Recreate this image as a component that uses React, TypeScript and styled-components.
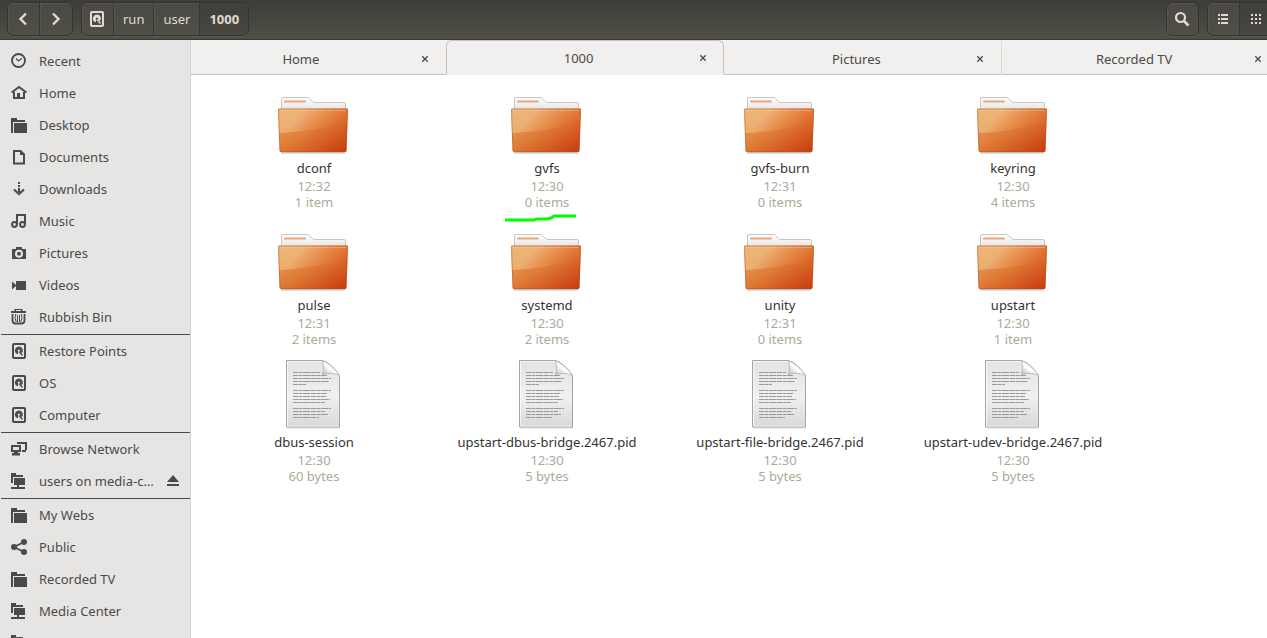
import React from "react";
import styled, { createGlobalStyle, css } from "styled-components";

const GlobalStyle = createGlobalStyle`
  * { box-sizing: border-box; }
  body { margin: 0; overflow: hidden; background: #fff; }
  body, button { font-family: "Noto Sans", "Open Sans", sans-serif; font-size: 13px; }
  button { margin: 0; padding: 0; border: 0; background: none; color: inherit; }
  svg { display: block; flex: none; }
`;

const Window = styled.div`
  display: flex;
  flex-direction: column;
  height: 100vh;
  overflow: hidden;
`;

const Toolbar = styled.header`
  flex: none;
  display: flex;
  align-items: flex-start;
  gap: 8px;
  height: 40px;
  padding: 2px 0 0 7px;
  overflow: hidden;
  background: linear-gradient(#3d3c38, #504f47);
  border-bottom: 1px solid #3a3934;
  color: #dfdbd2;
`;

const ButtonGroup = styled.div<{ $end?: boolean; $clipped?: boolean }>`
  display: flex;
  height: 34px;
  flex: none;
  border: 1px solid #34332f;
  border-radius: 6px;
  overflow: hidden;
  background: linear-gradient(#4a4943, #4f4e47);
  box-shadow: 0 1px #5a5951;
  ${(p) => p.$end && css`margin-left: auto;`}
  ${(p) => p.$clipped && css`margin-right: -6px;`}
`;

const ToolButton = styled.button<{ $active?: boolean }>`
  display: flex;
  align-items: center;
  justify-content: center;
  padding: 0 8px;
  box-shadow: inset 1px 1px #56554f;
  &:first-child { padding-left: 7px; }
  & + & { border-left: 1px solid #383733; }
  ${(p) =>
    p.$active &&
    css`
      background: linear-gradient(#403f3b, #484742);
      box-shadow: none;
    `}
`;

const PathButton = styled(ToolButton)`
  padding: 0 9px;
  border-left: 1px solid #383733;
  font-weight: ${(p) => (p.$active ? 700 : 400)};
`;

const Body = styled.div`
  flex: 1;
  display: flex;
  min-height: 0;
`;

const Sidebar = styled.nav`
  flex: none;
  width: 191px;
  padding-top: 5px;
  overflow: hidden;
  background: #e6e5e3;
  border-right: 1px solid #d6d4d1;
`;

const PlaceGroup = styled.ul`
  list-style: none;
  margin: 0;
  padding: 0;
  & + & {
    margin: 1px 0 0 1px;
    padding: 0;
    border-top: 1px solid #4a4a4a;
  }
  & + & li { margin-left: -1px; }
`;

const Place = styled.li`
  display: flex;
  align-items: center;
  height: 32px;
  padding: 0 9px 0 11px;
  color: #4a4a4a;
`;

const PlaceLink = styled.a`
  flex: 1;
  display: flex;
  align-items: center;
  gap: 12px;
  color: inherit;
  text-decoration: none;
  white-space: nowrap;
`;

const Main = styled.main`
  flex: 1;
  min-width: 0;
  display: flex;
  flex-direction: column;
`;

const TabClip = styled.div`
  flex: none;
  overflow: hidden;
  background: #f1f0ee;
`;

const TabBar = styled.div`
  display: flex;
  height: 35px;
  margin: 0 -12px 0 -23px;
`;

const Tab = styled.div<{ $active?: boolean }>`
  flex: 1;
  display: flex;
  align-items: center;
  padding: 2px 14px 0 0;
  color: #4a4a4a;
  border: 1px solid transparent;
  border-bottom-color: #c5c0b9;
  & + & { border-left-color: #dedbd7; }
  ${(p) =>
    p.$active &&
    css`
      && {
        padding-bottom: 1px;
        border-color: #c5c0b9;
        border-bottom-color: transparent;
      }
      border-radius: 6px 6px 0 0;
      && + div { border-left-color: transparent; }
    `}
`;

const TabTitle = styled.button`
  flex: 1;
  padding-left: 14px;
`;

const TabClose = styled.button`
  display: flex;
  align-items: center;
  justify-content: center;
  width: 12px;
  height: 16px;
`;

const Files = styled.div`
  flex: 1;
  display: grid;
  grid-template-columns: repeat(auto-fill, 232px);
  align-content: start;
  column-gap: 1px;
  row-gap: 10px;
  padding: 8px 6px;
  background: #fff;
`;

const FileCell = styled.figure`
  position: relative;
  display: flex;
  flex-direction: column;
  align-items: center;
  margin: 0;
`;

const Thumb = styled.div`
  display: flex;
  align-items: flex-end;
  height: 72px;
`;

const Caption = styled.figcaption`
  display: flex;
  flex-direction: column;
  align-items: center;
  padding: 4px 0 0 2px;
  line-height: 16px;
  color: #b0a899;
`;

const FileName = styled.span`
  margin-bottom: 1px;
  line-height: 18px;
  color: #333;
`;

const Underline = styled.svg`
  position: absolute;
  left: 75px;
  top: 130px;
`;

type IconName =
  | "recent" | "home" | "folder" | "document" | "download" | "music" | "camera"
  | "video" | "trash" | "disk" | "network" | "remote" | "share";

const shapes: Record<IconName, React.ReactNode> = {
  recent: (
    <g fill="none" stroke="currentColor">
      <circle cx="7.5" cy="7.5" r="6.5" strokeWidth="1.9" />
      <path d="M5 5.5 7.5 8 10.8 5.2" strokeWidth="1.2" />
    </g>
  ),
  home: (
    <>
      <path d="M.5 7.500 8 2l7.500 5.500" fill="none" stroke="currentColor" strokeWidth="2" />
      <path d="M2 7h2v5h2V8h3v4h3V7h2v7H2z" />
    </>
  ),
  folder: (
    <>
      <path d="M0 1h6v2h8v2H2v11H0z" />
      <path d="M3 6h13v10H3z" />
    </>
  ),
  document: (
    <path fillRule="evenodd" d="M2 1h8l4 4v10.500H2zM4 3v10.500h8V6H9V3z" />
  ),
  download: (
    <>
      <path d="M7 1h2v2H7zM7 4h2v2H7zM7 7h2v4H7z" />
      <path d="m3 8.500 5 4.500 5-4.500" fill="none" stroke="currentColor" strokeWidth="2.200" />
    </>
  ),
  music: (
    <g fill="none" stroke="currentColor" strokeWidth="2">
      <path d="M6 11V2h8v9" />
      <circle cx="3.500" cy="11.500" r="2.400" />
      <circle cx="11.500" cy="11.500" r="2.400" />
    </g>
  ),
  camera: (
    <path fillRule="evenodd" d="M5 2h6v2h4v10H1V4h4zM8 4.800a4 4 0 1 0 0 8 4 4 0 0 0 0-8zm0 2a2 2 0 1 1 0 4 2 2 0 0 1 0-4z" />
  ),
  video: <path d="M1 4.500 5 8V4h10v9H5V9l-4 3.500z" />,
  trash: (
    <>
      <path d="M3.500 0h8v2H15v2H0V2h3.500zM5 1v1h5V1z" fillRule="evenodd" />
      <path d="M1.500 5v6.500q0 3 3 3h6q3 0 3-3V5" fill="none" stroke="currentColor" strokeWidth="1.800" />
      <path d="M4.800 5q-1.800 3.500.4 8M6.500 6v7M8.500 6v7M10.200 5q1.800 3.500-.4 8" fill="none" stroke="currentColor" strokeWidth="1" />
    </>
  ),
  disk: (
    <>
      <rect x="2" y="1" width="12" height="14" rx="1" fill="none" stroke="currentColor" strokeWidth="2" />
      <path d="M8 3.500a4 4 0 0 0-2.500 7.200L7 11V8.500a1.200 1.200 0 1 1 2 0l2 1.500A4 4 0 0 0 8 3.500z" />
      <path d="m8 8.500 3.500 4" stroke="currentColor" strokeWidth="1.500" />
    </>
  ),
  network: (
    <>
      <path fillRule="evenodd" d="M0 4h10v7H0zM2 6v3h6V6z" />
      <path d="M3 11h4v1h2v2.500H1V12h2z" />
      <path d="M6 3V1h10v8h-1v2h-4V9h3V3z" />
    </>
  ),
  remote: (
    <>
      <path d="M0 0h5v2h7v2H2v6H0z" />
      <path d="M3 5h11v7H8v2h6v2H0v-2h6v-2H3z" />
    </>
  ),
  share: (
    <>
      <path d="M13 3 3 8l10 5" fill="none" stroke="currentColor" strokeWidth="1.800" />
      <circle cx="13" cy="3" r="3" />
      <circle cx="3" cy="8" r="3" />
      <circle cx="13" cy="13" r="3" />
    </>
  ),
};

const Icon = ({ name }: { name: IconName }) => (
  <svg width="16" height="16" viewBox="0 0 16 16" fill="currentColor" aria-hidden="true">
    {shapes[name]}
  </svg>
);

const Chevron = ({ flip }: { flip?: boolean }) => (
  <svg width="16" height="16" viewBox="0 0 16 16" fill="none" stroke="currentColor" strokeWidth="2.400">
    <path d={flip ? "m5 2.500 5.500 5.500L5 13.500" : "M11 2.500 5.500 8l5.500 5.500"} />
  </svg>
);

const FolderGradients = () => (
  <defs>
    <linearGradient id="folderFront" x1="0" y1="0" x2="1" y2="1">
      <stop offset="0" stopColor="#e8ab6c" />
      <stop offset=".5" stopColor="#de7a35" />
      <stop offset="1" stopColor="#c8380d" />
    </linearGradient>
    <linearGradient id="folderGlow" x1="0" y1="0" x2="1" y2=".3">
      <stop offset="0" stopColor="#f6cf97" stopOpacity=".35" />
      <stop offset=".35" stopColor="#f6cf97" stopOpacity=".5" />
      <stop offset="1" stopColor="#ea6a2c" stopOpacity=".25" />
    </linearGradient>
    <linearGradient id="folderBack" x1="0" y1="0" x2="0" y2="1">
      <stop offset="0" stopColor="#fff" />
      <stop offset="1" stopColor="#dedede" />
    </linearGradient>
  </defs>
);

const FolderArt = () => (
  <svg width="72" height="60" viewBox="0 0 72 60" aria-hidden="true">
    <FolderGradients />
    <path d="M4 57.500h64" stroke="#000" strokeOpacity=".25" strokeWidth="2" />
    <path d="M4.500 18V4q0-1.500 1.500-1.500h24q1.500 0 2.500 1l3 3q1 1 2.500 1h29q1.500 0 1.500 1.500v9z" fill="url(#folderBack)" stroke="#c6c6c6" />
    <path d="M8 6.500h20" stroke="#eda477" strokeWidth="2" strokeLinecap="round" />
    <path d="M2 13.500h68q1 0 1 1l-1.500 41q0 1.500-1.500 1.500H4q-1.500 0-1.500-1.500l-1.500-41q0-1 1-1z" fill="url(#folderFront)" />
    <path d="M2 13.500h68q1 0 1 1l-.6 12Q34 37 2.200 38l-1.200-23.500q0-1 1-1z" fill="url(#folderGlow)" />
    <path d="M2 14h68q.5 0 .5 1L69 55q0 1.500-1.500 1.500h-63Q3 56.500 3 55L1.500 15q0-1 .5-1z" fill="none" stroke="#b54c1c" strokeOpacity=".4" />
    <path d="M3 15.500h66" stroke="#f3c499" strokeOpacity=".5" />
  </svg>
);

const textLines = [
  "M8 13.500h27M8 16.500h34M8 19.500h38M8 22.500h36M8 25.500h13",
  "M8 31.500h38M8 34.500h34M8 37.500h33M8 40.500h37M8 43.500h32",
  "M8 49.500h38M8 52.500h32M8 55.500h35M8 58.500h26",
];

const PageArt = () => (
  <svg width="56" height="70" viewBox="0 0 56 70" aria-hidden="true">
    <defs>
      <linearGradient id="paper" x1="0" y1="0" x2="0" y2="1">
        <stop offset="0" stopColor="#e3e3e3" />
        <stop offset=".55" stopColor="#f0f0f0" />
        <stop offset="1" stopColor="#d8d8d8" />
      </linearGradient>
      <linearGradient id="curl" x1="0" y1="1" x2="1" y2="0">
        <stop offset="0" stopColor="#b0b0b0" />
        <stop offset=".45" stopColor="#fff" />
        <stop offset="1" stopColor="#c8c8c8" />
      </linearGradient>
    </defs>
    <path d="M2 69h53" stroke="#000" strokeOpacity=".14" />
    <path d="M1.500 1.500h36q8 2 17 15v51.500h-53z" fill="url(#paper)" stroke="#a4a4a4" />
    <path d="M2.500 2.500h35M2.500 2.500v64.500h51" fill="none" stroke="#fff" strokeOpacity=".7" />
    <path d="M37 1.500q3 5 .5 14 9-3 17 1Q47 5 37 1.500z" fill="url(#curl)" stroke="#b0b0b0" strokeWidth=".8" />
    {textLines.map((d) => (
      <g key={d}>
        <path d={d} stroke="#c4c4c4" />
        <path d={d} stroke="#9a9a9a" strokeDasharray="5 1 3 1 7 1" />
      </g>
    ))}
  </svg>
);

const groups: { icon: IconName; label: string; eject?: boolean }[][] = [
  [
    { icon: "recent", label: "Recent" },
    { icon: "home", label: "Home" },
    { icon: "folder", label: "Desktop" },
    { icon: "document", label: "Documents" },
    { icon: "download", label: "Downloads" },
    { icon: "music", label: "Music" },
    { icon: "camera", label: "Pictures" },
    { icon: "video", label: "Videos" },
    { icon: "trash", label: "Rubbish Bin" },
  ],
  [
    { icon: "disk", label: "Restore Points" },
    { icon: "disk", label: "OS" },
    { icon: "disk", label: "Computer" },
  ],
  [
    { icon: "network", label: "Browse Network" },
    { icon: "remote", label: "users on media-c…", eject: true },
  ],
  [
    { icon: "folder", label: "My Webs" },
    { icon: "share", label: "Public" },
    { icon: "folder", label: "Recorded TV" },
    { icon: "remote", label: "Media Center" },
    { icon: "remote", label: "" },
  ],
];

const tabs = ["Home", "1000", "Pictures", "Recorded TV"];

const files = [
  { name: "dconf", time: "12:32", size: "1 item" },
  { name: "gvfs", time: "12:30", size: "0 items", marked: true },
  { name: "gvfs-burn", time: "12:31", size: "0 items" },
  { name: "keyring", time: "12:30", size: "4 items" },
  { name: "pulse", time: "12:31", size: "2 items" },
  { name: "systemd", time: "12:30", size: "2 items" },
  { name: "unity", time: "12:31", size: "0 items" },
  { name: "upstart", time: "12:30", size: "1 item" },
  { name: "dbus-session", time: "12:30", size: "60 bytes", page: true },
  { name: "upstart-dbus-bridge.2467.pid", time: "12:30", size: "5 bytes", page: true },
  { name: "upstart-file-bridge.2467.pid", time: "12:30", size: "5 bytes", page: true },
  { name: "upstart-udev-bridge.2467.pid", time: "12:30", size: "5 bytes", page: true },
];

export default function App() {
  return (
    <Window>
      <GlobalStyle />
      <Toolbar>
        <ButtonGroup>
          <ToolButton aria-label="Back"><Chevron /></ToolButton>
          <ToolButton aria-label="Forward"><Chevron flip /></ToolButton>
        </ButtonGroup>
        <ButtonGroup>
          <ToolButton aria-label="File system"><Icon name="disk" /></ToolButton>
          <PathButton>run</PathButton>
          <PathButton>user</PathButton>
          <PathButton $active>1000</PathButton>
        </ButtonGroup>
        <ButtonGroup $end>
          <ToolButton aria-label="Search">
            <svg width="16" height="16" viewBox="0 0 16 16" fill="none" stroke="currentColor">
              <circle cx="6.500" cy="6.500" r="4.500" strokeWidth="2.200" />
              <path d="m10 10 4.500 4.500" strokeWidth="2.600" />
            </svg>
          </ToolButton>
        </ButtonGroup>
        <ButtonGroup $clipped>
          <ToolButton aria-label="List view">
            <svg width="16" height="16" viewBox="0 0 16 16" fill="currentColor">
              <path d="M3 3h2v2H3zM6 3h7v2H6zM3 7h2v2H3zM6 7h7v2H6zM3 11h2v2H3zM6 11h7v2H6z" />
            </svg>
          </ToolButton>
          <ToolButton $active aria-label="Icon view">
            <svg width="16" height="16" viewBox="0 0 16 16" fill="currentColor">
              <path d="M3 3h2v2H3zM7 3h2v2H7zM11 3h2v2h-2zM3 7h2v2H3zM7 7h2v2H7zM11 7h2v2h-2zM3 11h2v2H3zM7 11h2v2H7zM11 11h2v2h-2z" />
            </svg>
          </ToolButton>
        </ButtonGroup>
      </Toolbar>
      <Body>
        <Sidebar>
          {groups.map((group, g) => (
            <PlaceGroup key={g}>
              {group.map((place, i) => (
                <Place key={i}>
                  <PlaceLink href="#">
                    <Icon name={place.icon} />
                    {place.label}
                  </PlaceLink>
                  {place.eject && (
                    <button aria-label="Eject">
                      <svg width="16" height="16" viewBox="0 0 16 16" fill="currentColor">
                        <path d="M8 2 14 9H2zM2 11h12v2H2z" />
                      </svg>
                    </button>
                  )}
                </Place>
              ))}
            </PlaceGroup>
          ))}
        </Sidebar>
        <Main>
          <TabClip>
            <TabBar>
              {tabs.map((title) => (
                <Tab key={title} $active={title === "1000"}>
                  <TabTitle>{title}</TabTitle>
                  <TabClose aria-label={`Close ${title}`}>
                    <svg width="8" height="8" viewBox="0 0 8 8" stroke="currentColor" strokeWidth="1.300">
                      <path d="m1.300 1.300 5.400 5.400M6.700 1.300 1.300 6.700" />
                    </svg>
                  </TabClose>
                </Tab>
              ))}
            </TabBar>
          </TabClip>
          <Files>
            {files.map((file) => (
              <FileCell key={file.name}>
                <Thumb>{file.page ? <PageArt /> : <FolderArt />}</Thumb>
                <Caption>
                  <FileName>{file.name}</FileName>
                  <span>{file.time}</span>
                  <span>{file.size}</span>
                </Caption>
                {file.marked && (
                  <Underline width="72" height="9" viewBox="0 0 72 9" fill="none" stroke="#0f0" strokeWidth="3">
                    <path d="M0 7h29l3-1h10l4-1 3-2h22" />
                  </Underline>
                )}
              </FileCell>
            ))}
          </Files>
        </Main>
      </Body>
    </Window>
  );
}
